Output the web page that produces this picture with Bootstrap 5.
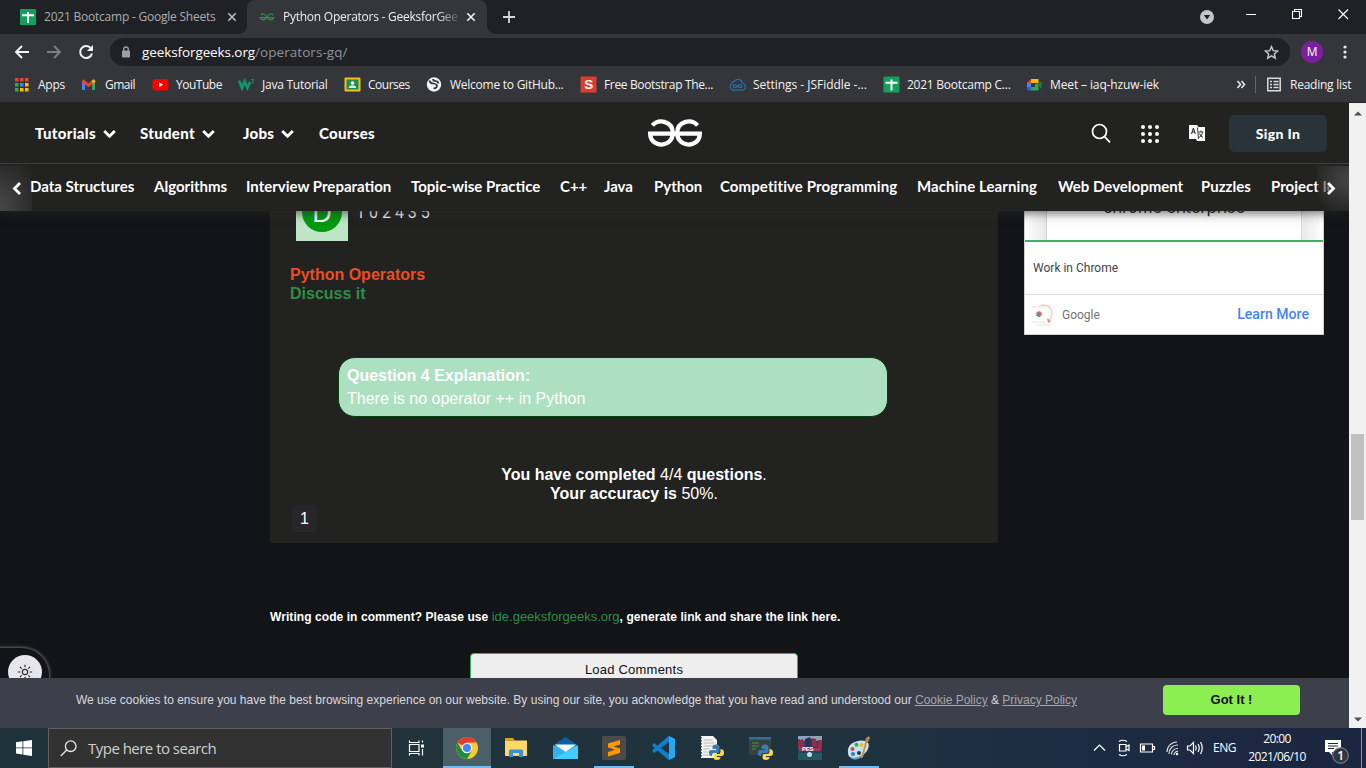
<!DOCTYPE html>
<html lang="en">
<head>
<meta charset="utf-8">
<meta name="viewport" content="width=device-width, initial-scale=1">
<title>Python Operators - GeeksforGeeks</title>
<link href="https://cdn.jsdelivr.net/npm/bootstrap@5.3.0/dist/css/bootstrap.min.css" rel="stylesheet">
<style>
  body { width: 1366px; height: 768px; background: #131417; font-family: "Liberation Sans", Arial, sans-serif; }
  svg { display: block; flex: none; }
  .ui { font-family: "Open Sans", "Noto Sans", sans-serif; font-size: 12px; letter-spacing: -.25px; white-space: nowrap; }

  /* browser chrome */
  .tabstrip { height: 34px; background: #202124; }
  .tab { height: 34px; }
  .tab-1 { width: 247px; padding: 0 10px 0 20px; color: #a9adb2; letter-spacing: -.22px; }
  .tab-2 { width: 240px; padding: 0 11px 0 12px; background: #35363a; border-radius: 8px 8px 0 0; color: #eceef0; }
  .tab-2::before, .tab-2::after { content: ""; position: absolute; bottom: 0; width: 8px; height: 8px; }
  .tab-2::before { left: -8px; background: radial-gradient(circle at 0 0, transparent 7.5px, #35363a 8px); }
  .tab-2::after { right: -8px; background: radial-gradient(circle at 100% 0, transparent 7.5px, #35363a 8px); }
  .tab-title { width: 175px; overflow: hidden; }
  .fade-out { -webkit-mask-image: linear-gradient(90deg, #000 155px, transparent 178px); mask-image: linear-gradient(90deg, #000 155px, transparent 178px); }
  .toolbar { height: 36px; background: #35363a; padding: 0 15px 0 14px; }
  .omnibox { width: 1180px; height: 28px; border-radius: 14px; background: #202124; margin-left: 13px; padding: 0 11px 0 11px; font-size: 13.5px; letter-spacing: -.1px; color: #fff; }
  .omnibox .path { color: #8f9296; letter-spacing: .06px; }
  .avatar { width: 22px; height: 22px; background: #7b1fa2; color: #fff; font-size: 12px; line-height: 21px; margin-left: 11px; }
  .bookmarks { height: 33px; background: #35363a; border-bottom: 1px solid #252529; color: #f2f3f4;
    display: grid; grid-template-columns: 67px 72px 86px 106px 82px 154px 149px 154px 143px 210px 19px 11px 1fr; padding-left: 13px; align-items: center; padding-bottom: 3px; }
  .bookmarks > div { display: flex; align-items: center; gap: 7px; }
  .bookmarks > div:nth-child(-n+2) { gap: 8px; }
  .bookmarks svg { width: 17px; height: 17px; }
  .t4 { letter-spacing: -.48px; } .t0 { letter-spacing: -.03px; } .t1 { letter-spacing: -.12px; } .t3 { letter-spacing: -.35px; }

  /* site */
  .site { width: 1349px; height: 625px; }
  .main-nav { height: 61px; background: #222221; border-bottom: 1px solid #464645; color: #fff; padding-left: 35px; }
  .menu { display: grid; grid-template-columns: 105px 103px 76px 329px; font: 900 15px/60px Lato, sans-serif; letter-spacing: .3px; }
  .menu > div { display: flex; align-items: center; gap: 7px; }
  .menu svg { margin-top: 2px; }
  .signin { width: 98px; height: 37px; border-radius: 5px; background: #293339; font: 900 14px/37px Lato, sans-serif; letter-spacing: .35px; margin: 0 22px 0 24px; }
  .sub-nav { height: 47px; background: #222221; z-index: 2; box-shadow: 0 2px 10px rgba(40,40,40,.7); color: #fff; font: 700 15px/44px Lato, sans-serif; padding-left: 30px;
    display: grid; grid-template-columns: 124px 92px 165px 149px 44px 50px 66px 197px 141px 143px 70px 61px; white-space: nowrap; }
  .wide { letter-spacing: .1px; }
  .edge { position: absolute; top: 2px; height: 45px; width: 32px; display: flex; align-items: center; }
  .edge-l { left: 0; padding-left: 12px; background: radial-gradient(ellipse at 0 90%, #484848, rgba(34,34,33,0) 95%); }
  .edge-r { right: 0; padding-left: 9px; background: radial-gradient(ellipse at 100% 30%, #424242 10%, rgba(34,34,33,.35) 85%, transparent); }
  .content { height: 467px; overflow: hidden; }
  .quiz { width: 728px; height: 332px; background: #222221; margin-left: 270px; padding: 0 20px; color: #fff; font-size: 16px; line-height: 19px; }
  .answer { margin: -22px 0 24px 6px; height: 52px; gap: 8px; font-family: Roboto, sans-serif; }
  .answer > span { padding-bottom: 5px; }
  .letter-box { width: 52px; height: 52px; background: #bfe6c4; padding: 3px 6px; }
  .letter-disc { width: 40px; height: 40px; background: #009a10; font: 27px/42px "Liberation Sans", sans-serif; }
  .topic { color: #ec4e20; }
  .green { color: #2f8d46; }
  .explain { width: 550px; height: 60px; border: 1px solid #053f09; border-radius: 17px; background: #addfc1; margin: 54px 0 48px 48px; padding: 7px 8px; line-height: 22.5px; }
  .page-no { width: 25px; height: 27px; background: #27272a; border-radius: 4px; line-height: 27px; margin: 2px 0 0 2px; }
  .note { margin: 64px 0 0 270px; font-size: 12px; line-height: 20px; letter-spacing: .07px; color: #fff; }
  .note span { font-size: 13px; letter-spacing: 0; }
  .load { width: 328px; height: 40px; margin: 26px 0 0 470px; background: #eee; border: 1px solid #34b35c; border-radius: 4px; color: #111; font-size: 13px; line-height: 31px; letter-spacing: .22px; }
  .promo { width: 300px; height: 124px; background: #fff; margin-left: 26px; border: 1px solid #cfcfcf; border-top: 0; font-family: Roboto, sans-serif; font-size: 12px; color: #444; }
  .promo-art { height: 31px; border-bottom: 2px solid #3fb165; background: linear-gradient(90deg, #fff, #e9e9e9 21px, #fff 22px, #fff 277px, #e9e9e9 278px, #fff); padding: 0 21px; }
  .promo-art div { height: 29px; overflow: hidden; border: solid #d2d2d2; border-width: 0 1px; background: #fff; color: #222; font: 17px/20px Inter, sans-serif; letter-spacing: -.33px; }
  .promo-art span { display: block; margin-top: -14px; }
  .promo-text { height: 53px; border-bottom: 1px solid #ddd; padding: 0 8px; line-height: 53px; }
  .promo-foot { height: 39px; padding: 0 14px 0 7px; color: #757575; }
  .promo-foot b { font-size: 14px; font-weight: 500; color: #4285f4; letter-spacing: .05px; }
  .theme { left: -20px; top: 545px; width: 69px; height: 55px; border-radius: 0 27px 27px 0; background: #131417; box-shadow: 0 0 3px 1px #666; padding: 7px 0 0 28px; }
  .cookies { height: 50px; background: #3d404b; color: #d9d9dc; font-size: 12px; padding: 0 49px 6px 76px; z-index: 3; }
  .cookies u { color: #a5a6aa; }
  .gotit { width: 137px; height: 30px; border-radius: 4px; background: #8bef52; color: #111; font-size: 13px; line-height: 30px; }
  .scroller { width: 17px; background: #f1f1f1; padding: 8px 0 6px; }
  .scroll-thumb { width: 13px; height: 86px; background: #c1c1c1; margin-top: 318px; }

  /* taskbar */
  .taskbar { height: 40px; background: linear-gradient(90deg, #1e323a, #21323a 25%, #1f343e 60%, #1c2b42 80%, #1b2640); color: #fff; }
  .start { width: 48px; }
  .search { width: 344px; height: 40px; border: 1px solid #5f5f5f; background: #323232; color: #d0d0d0; gap: 11px; padding-left: 11px; font-size: 15px; letter-spacing: -.52px; }
  .app { width: 48px; height: 40px; margin-right: 1px; padding-bottom: 1px; }
  .app.active { background: #4b5f68; box-shadow: inset 0 -2px #76b9ed; }
  .app.running { background: linear-gradient(#76b9ed, #76b9ed) center bottom/40px 2px no-repeat; }
  .lang { margin-left: 6px; letter-spacing: -.48px; }
  .clock { line-height: 18px; width: 76px; letter-spacing: -.6px; margin-left: 3px; }
  .notif { margin-left: 8px; }
  .tray-edge { width: 5px; border-left: 1px solid #8690a0; height: 40px; }
</style>
</head>
<body class="d-flex flex-column overflow-hidden">

<!-- tabs -->
<div class="tabstrip ui d-flex justify-content-between">
  <div class="d-flex">
    <div class="tab tab-1 d-flex align-items-center">
      <svg width="16" height="16"><rect width="16" height="16" rx="1" fill="#12a05c"/><path d="M2 6.3H14M8 3V14" stroke="#fff" stroke-width="2"/></svg>
      <span class="ms-2 me-auto">2021 Bootcamp - Google Sheets</span>
      <svg width="10" height="10"><path d="M1.3 1.3 8.7 8.7M8.7 1.3 1.3 8.7" stroke="#bdc1c6" stroke-width="1.6"/></svg>
    </div>
    <div class="tab tab-2 position-relative d-flex align-items-center">
      <svg width="16" height="16" viewBox="0 0 56 56" fill="none" stroke="#2f8d46" stroke-width="4.500"><path d="M7 21A11 11 0 0 1 26 29 11.500 11.500 0 0 1 4 30H52A11.500 11.500 0 0 1 30 29 11 11 0 0 1 49 21"/></svg>
      <span class="tab-title fade-out ms-2 me-auto">Python Operators - GeeksforGeeks</span>
      <svg width="10" height="10"><path d="M1.3 1.3 8.7 8.7M8.7 1.3 1.3 8.7" stroke="#f1f3f4" stroke-width="1.6"/></svg>
    </div>
    <svg class="ms-3 mt-1" width="12" height="26"><path d="M0 13H12M6 7V19" stroke="#d5d7da" stroke-width="1.8"/></svg>
  </div>
  <div class="d-flex">
    <svg width="170" height="34"><circle cx="11" cy="17" r="7" fill="#c4c6c9"/><path d="M7.8 15H14.2L11 19.6Z" fill="#202124"/>
      <g stroke="#fff" fill="none" stroke-width="1.1"><path d="M50 14.5H60M142.500 9.500 152 19M152 9.500 142.500 19"/><path d="M96.500 11.500h7v7h-7zM98.500 11.500v-2h7v7h-2"/></g></svg>
  </div>
</div>

<!-- toolbar -->
<div class="toolbar ui d-flex align-items-center">
  <svg width="64" height="20" fill="none" stroke-width="1.9"><path d="M15 10H2.500M8 4 2 10l6 6" stroke="#f1f3f4"/><path d="M33 10H45.500M40 4l6 6-6 6" stroke="#7d7f83"/></svg>
  <svg width="16" height="16" fill="none"><path d="M13 4.500A6 6 0 1 0 14 9.500" stroke="#f1f3f4" stroke-width="2"/><path d="M15 1V7H9Z" fill="#f1f3f4"/></svg>
  <div class="omnibox d-flex align-items-center ms-3">
    <svg width="10" height="12"><rect x="1" y="4.500" width="8" height="7" rx="1" fill="#9aa0a6"/><path d="M2.700 5V3.300a2.300 2.300 0 0 1 4.600 0V5" stroke="#9aa0a6" fill="none" stroke-width="1.300"/></svg>
    <span style="margin-left:11px">geeksforgeeks.org<span class="path">/operators-gq/</span></span>
    <svg class="ms-auto" width="15" height="15" viewBox="0 0 15 15"><path d="M7.500 1.600 9.200 5.600 13.600 6 10.300 8.900 11.300 13.200 7.500 10.900 3.700 13.200 4.700 8.900 1.400 6 5.800 5.600Z" fill="none" stroke="#c8cacd" stroke-width="1.400"/></svg>
  </div>
  <div class="avatar rounded-circle text-center">M</div>
  <svg class="ms-auto" width="12" height="16" fill="#e8eaed"><circle cx="6" cy="3" r="1.600"/><circle cx="6" cy="8" r="1.600"/><circle cx="6" cy="13" r="1.600"/></svg>
</div>

<!-- bookmarks -->
<div class="bookmarks ui">
  <div><svg viewBox="0 0 17 17"><path d="M2 2h3.500v3.500H2zM7 2h3.500v3.500H7zM12 2h3.500v3.500H12z" fill="#ea4335"/><path d="M2 7h3.500v3.500H2z" fill="#34a853"/><path d="M7 7h3.500v3.500H7z" fill="#4285f4"/><path d="M12 7h3.500v3.500H12zM7 12h3.500v3.500H7zM12 12h3.500v3.500H12z" fill="#fbbc04"/><path d="M2 12h3.500v3.500H2z" fill="#34a853"/></svg>Apps</div>
  <div class="t4"><svg viewBox="0 0 17 17" fill="none" stroke-width="3"><path d="M3.500 14V5" stroke="#4285f4"/><path d="M13.500 14V5" stroke="#34a853"/><path d="M2.500 4.500 8.500 9.300 14.500 4.500" stroke="#ea4335"/><path d="M12.300 6.300 14.700 4.300" stroke="#fbbc04"/></svg>Gmail</div>
  <div class="t4"><svg viewBox="0 0 17 17"><rect x=".5" y="3" width="16" height="11.500" rx="3" fill="#f00"/><path d="M7 6.200v5l4-2.500Z" fill="#fff"/></svg>YouTube</div>
  <div><svg viewBox="0 0 17 17"><path d="M1 4.500 4 12 6.700 5.500l2.700 6.500L12 6" fill="none" stroke="#0c9966" stroke-width="2.600"/><path d="M13 3.500h2.500l-1 1.500q1.400.3.900 1.500-.7.800-2.100.3" fill="none" stroke="#0c9966"/></svg>Java Tutorial</div>
  <div class="t4"><svg viewBox="0 0 17 17"><rect x=".5" y="1.500" width="16" height="14" rx="1" fill="#f6bb20"/><path d="M2.500 3.500h12v10h-12z" fill="#218d4d"/><circle cx="8.500" cy="7" r="1.800" fill="#fff"/><path d="M4.800 12q0-2.800 3.700-2.800t3.700 2.800z" fill="#d7eee0"/></svg>Courses</div>
  <div><svg viewBox="0 0 17 17"><circle cx="8" cy="8.500" r="7.200" fill="#f1f3f4"/><path d="M3.500 4.500q.5 3 4 3 3.500.5 3.500 2.500t-3.500 2.500M7 3q0 2 2.500 2t3 2.500" fill="none" stroke="#35363a" stroke-width="1.700"/></svg>Welcome to GitHub...</div>
  <div class="t3"><svg viewBox="0 0 17 17"><path d="M.5.500h16v16H.5z" fill="#dc3b30"/><text x="8.500" y="13.300" text-anchor="middle" font-family="Liberation Sans" font-weight="700" font-size="13.500" fill="#fff">S</text></svg>Free Bootstrap The...</div>
  <div class="t0"><svg viewBox="0 0 17 17" fill="none" stroke="#2270b8" stroke-width="1.200"><path d="M4.500 14.200a3.600 3.600 0 0 1-1.600-6.600Q3 5 5.500 5.500a4.200 4.200 0 0 1 7.800 2 3.300 3.300 0 0 1-.8 6.700Z"/><path d="M8.500 10.200C7 8.300 4.300 8.300 4.300 10.200s2.700 1.900 4.200 0 4.200-1.900 4.200 0-2.700 1.900-4.200 0"/></svg>Settings - JSFiddle -...</div>
  <div><svg viewBox="0 0 17 17"><rect x=".5" y=".5" width="16" height="16" rx="1" fill="#12a05c"/><path d="M2.500 6.800H14.500M8.500 3.500V14.500" stroke="#fff" stroke-width="2"/></svg>2021 Bootcamp C...</div>
  <div class="t1"><svg viewBox="0 0 17 17"><path d="M1 7 5 3v4z" fill="#ea4335"/><path d="M5 3h7.500v4H5z" fill="#fbbc04"/><path d="M1 7h4v4H1z" fill="#4285f4"/><path d="M1 11h4v3.500H2.500Q1 14.500 1 13z" fill="#1967d2"/><path d="M5 11h4V8.500l3.500-1.500v7.500H5z" fill="#34a853"/><path d="m12 8.500 3.500-3.500v8L12 10z" fill="#188038"/></svg>Meet – iaq-hzuw-iek</div>
  <div><svg viewBox="0 0 17 17"><path d="m1.500 5 3 3.500-3 3.500M5.500 5l3 3.500-3 3.500" fill="none" stroke="#e8eaed" stroke-width="1.600"/></svg></div>
  <div><svg viewBox="0 0 17 17"><path d="M.5 0V17" stroke="#66686c"/></svg></div>
  <div><svg viewBox="0 0 17 17" fill="none" stroke="#dadce0"><path d="M1.800 2.300h12.400v12.400H1.800z" stroke-width="1.500"/><path d="M4 5.500h2M4 8.500h2M4 11.500h2M7.500 5.500h5M7.500 8.500h5M7.500 11.500h5" stroke-width="1.400"/></svg>Reading list</div>
</div>

<!-- page and scrollbar -->
<div class="d-flex">
  <div class="site position-relative overflow-hidden">
    <div class="main-nav d-flex align-items-center">
      <div class="menu">
        <div>Tutorials<svg width="13" height="10"><path d="m1.200 2 5.300 5.300L11.800 2" fill="none" stroke="#fff" stroke-width="2.800"/></svg></div>
        <div>Student<svg width="13" height="10"><path d="m1.200 2 5.300 5.300L11.800 2" fill="none" stroke="#fff" stroke-width="2.800"/></svg></div>
        <div>Jobs<svg width="13" height="10"><path d="m1.200 2 5.300 5.300L11.800 2" fill="none" stroke="#fff" stroke-width="2.800"/></svg></div>
        <div>Courses</div>
      </div>
      <svg width="54" height="28" viewBox="0 0 54 28" fill="none" stroke="#fff" stroke-width="4.300"><path d="M4.400 6.400C11-1 24.800 2.500 24.800 14 24.800 29 2.400 29.500 2.200 14.700H51.800C51.600 29.500 29.200 29 29.200 14 29.200 2.500 43-1 49.600 6.400"/></svg>
      <svg class="ms-auto" width="20" height="20" fill="none" stroke="#fff" stroke-width="1.700"><circle cx="8.500" cy="8.500" r="7"/><path d="m13.500 13.700 5.500 5.600"/></svg>
      <svg style="margin-left:30px" width="18" height="19" fill="#fff"><g id="dots"><circle cx="2" cy="3" r="2"/><circle cx="9" cy="3" r="2"/><circle cx="16" cy="3" r="2"/></g><use href="#dots" y="7"/><use href="#dots" y="14"/></svg>
      <svg style="margin-left:30px" width="16" height="16"><path d="M0 0h8l1.500 2H16v14H8l-1-2H0z" fill="#fff"/><path d="M2.500 9 4.400 3l1.900 6M3.200 7h2.500" stroke="#222" fill="none"/><path d="M9.500 7h5M12 5.500V7M10 12.500Q13 11 13.500 7.500M10.500 8.500q1 3 3.500 4M8.500 2.500 9.500 14" stroke="#222" fill="none" stroke-width=".9"/></svg>
      <div class="signin text-center">Sign In</div>
    </div>
    <div class="sub-nav position-relative">
      <div>Data Structures</div><div>Algorithms</div><div>Interview Preparation</div><div>Topic-wise Practice</div><div>C++</div><div>Java</div><div>Python</div><div class="wide">Competitive Programming</div><div class="wide">Machine Learning</div><div>Web Development</div><div>Puzzles</div><div class="overflow-hidden">Project Ideas</div>
      <div class="edge edge-l"><svg width="10" height="13"><path d="M8 1 2.500 6.500 8 12" fill="none" stroke="#fff" stroke-width="2.800"/></svg></div>
      <div class="edge edge-r"><svg width="10" height="13"><path d="m2 1 5.500 5.500L2 12" fill="none" stroke="#fff" stroke-width="2.800"/></svg></div>
    </div>

    <div class="content">
      <div class="d-flex">
        <div class="quiz">
          <div class="answer d-flex align-items-center">
            <div class="letter-box"><div class="letter-disc rounded-circle text-center">D</div></div>
            <span>1 0 2 4 3 5</span>
          </div>
          <div class="fw-bold topic">Python Operators</div>
          <div class="fw-bold green">Discuss it</div>
          <div class="explain"><b>Question 4 Explanation:</b><br>There is no operator ++ in Python</div>
          <div class="text-center"><b>You have completed</b> 4/4 <b>questions</b>.<br><b>Your accuracy is</b> 50%.</div>
          <div class="page-no text-center">1</div>
        </div>
        <div class="promo">
          <div class="promo-art"><div class="text-center"><span>chrome enterprise</span></div></div>
          <div class="promo-text">Work in Chrome</div>
          <div class="promo-foot d-flex align-items-center">
            <svg class="me-2" width="22" height="22"><path d="M6 3a8 8 0 1 1 11 13" fill="none" stroke="#fbc9c6" stroke-width="1.300"/><path d="M0 3h14M0 18h14M4 21h14" stroke="#f0f0f0" stroke-width="2"/><circle cx="7" cy="10" r="2.700" fill="#dc6a58"/><circle cx="7" cy="10.300" r="1.100" fill="#4285f4"/><path d="M4.800 10.500a2.300 2.300 0 0 0 3 2" stroke="#34a853" fill="none"/><path d="M15 14l4 3-3 2.500z" fill="#f28b82"/></svg>
            <span>Google</span><b class="ms-auto">Learn More</b>
          </div>
        </div>
      </div>
      <div class="note fw-bold">Writing code in comment? Please use <span class="green fw-normal">ide.geeksforgeeks.org</span>, generate link and share the link here.</div>
      <div class="load text-center">Load Comments</div>
    </div>

    <div class="theme position-absolute">
      <svg width="34" height="34"><circle cx="17" cy="17" r="17" fill="#e6e6ec"/><g fill="none" stroke="#333" stroke-width="1.200"><circle cx="17" cy="17" r="2.700"/><path d="M17 9.800v2.500M17 21.700v2.500M9.800 17h2.500M21.700 17h2.500M11.900 11.900l1.800 1.800M20.300 20.300l1.800 1.800M11.900 22.100l1.800-1.800M20.300 13.700l1.800-1.800"/></g></svg>
    </div>
    <div class="cookies position-relative d-flex align-items-center justify-content-between">
      <span>We use cookies to ensure you have the best browsing experience on our website. By using our site, you acknowledge that you have read and understood our <u>Cookie Policy</u> &amp; <u>Privacy Policy</u></span>
      <div class="gotit text-center fw-bold">Got It !</div>
    </div>
  </div>
  <div class="scroller d-flex flex-column align-items-center">
    <svg width="8" height="5"><path d="M0 4.500 4 .5 8 4.500z" fill="#505050"/></svg>
    <div class="scroll-thumb"></div>
    <svg class="mt-auto" width="8" height="5"><path d="M0 .5 4 4.500 8 .5z" fill="#505050"/></svg>
  </div>
</div>

<!-- taskbar -->
<div class="taskbar ui d-flex align-items-center">
  <div class="start d-flex justify-content-center"><svg width="16" height="16" fill="#fff"><path d="M0 2.300 6.500 1.300v6.200H0zM7.300 1.200 16 0v7.500H7.300zM0 8.300h6.500v6.200L0 13.600zM7.300 8.300H16V16l-8.700-1.300z"/></svg></div>
  <div class="search d-flex align-items-center">
    <svg width="17" height="17" fill="none" stroke="#e8e8e8" stroke-width="1.300"><circle cx="10.700" cy="6.200" r="5.300"/><path d="M6.800 10 .8 16"/></svg>Type here to search
  </div>
  <div class="app d-flex align-items-center justify-content-center"><svg width="17" height="16" fill="none" stroke="#fff" stroke-width="1.200"><path d="M1.500 4.500h9.500v7H1.500zM1.500.500V2.500H11V.500M1.500 15.500V13.500H11V15.500M14.500.500v2M14.500 9v6.500"/><path d="M13 4.500h3v3h-3z" fill="#fff" stroke="none"/></svg></div>
  <div class="d-flex" style="margin-left:2px">
    <div class="app active d-flex align-items-center justify-content-center"><svg width="22" height="22" viewBox="0 0 22 22"><circle cx="11" cy="11" r="11" fill="#fcc934"/><path d="M11 11 1.500 5.500A11 11 0 0 1 20.500 5.500H11z" fill="#e33b2e"/><path d="M1.500 5.500A11 11 0 0 0 11 22l4.800-8.300L11 11 6.200 13.700z" fill="#1e8e3e"/><circle cx="11" cy="11" r="5.300" fill="#fff"/><circle cx="11" cy="11" r="4.100" fill="#4285f4"/></svg></div>
    <div class="app d-flex align-items-center justify-content-center"><svg width="22" height="19"><path d="M0 0h8l2 2.500H0z" fill="#e2a100"/><path d="M0 2.500h22V18H0z" fill="#ffd766"/><path d="M4 19v-6q0-1.500 1.500-1.500h11Q18 11.500 18 13v6h-4v-4H8v4z" fill="#3a8fd6"/></svg></div>
    <div class="app d-flex align-items-center justify-content-center"><svg width="25" height="22"><path d="M0 8.500 12.500 0 25 8.500z" fill="#0f5fa8"/><path d="M0 8.500h25V22H0z" fill="#2fb1f0"/><path d="M0 22 25 8.500V22z" fill="#44cdfc"/><path d="M2 7.500h21L12.500 15z" fill="#f5f8fb"/></svg></div>
    <div class="app running d-flex align-items-center justify-content-center"><svg width="24" height="24"><rect width="24" height="24" rx="2" fill="#4b4b4b"/><path d="M18 4v4.500l-6.500 2 6.500 2v4.500L6 20.500V16l7-2.200-7-2.300V7.500z" fill="#ff9800"/></svg></div>
    <div class="app d-flex align-items-center justify-content-center"><svg width="24" height="24"><path d="M17.500 0 24 3v18l-6.500 3L1 9.500 3 7l15 11V6L3 17 1 14.500z" fill="#0e7fcb"/><path d="M18 0l6 3v18l-6 3z" fill="#2ba7ef"/></svg></div>
    <div class="app d-flex align-items-center justify-content-center"><svg width="24" height="24"><path d="M1 0h12l4 4v18H1z" fill="#f3f3f3"/><path d="M3.500 4h9M3.500 7h11M3.500 10h11M3.500 13h6M3.500 16h5M3.500 19h5" stroke="#b5b5b5"/><path d="M1.500 1v21" stroke="#555" stroke-dasharray="1.500"/><g id="py"><path d="M9 18v-2q0-2 2-2h5v-1h-3.500v-2Q12.500 8.500 16 8.500t3.500 2.500v4q0 2-2 2H14q-2 0-2 3h-1q-2 0-2-2z" fill="#3d7ab0"/><path d="M20.500 13q3.500 0 3.500 3.500T21.500 20H17v1h3.500q0 3-3.500 3t-3.500-2.500V20q0-2 2-2H18q2.500 0 2.500-2.500z" fill="#ffd845"/></g></svg></div>
    <div class="app d-flex align-items-center justify-content-center"><svg width="24" height="24"><path d="M0 1h22v18H0z" fill="#3c3f41"/><path d="M0 1h22v2.500H0z" fill="#356f9f"/><path d="M3 7h7M3 10h7M3 13h4" stroke="#35833a" stroke-width="1.300"/><use href="#py"/></svg></div>
    <div class="app d-flex align-items-center justify-content-center"><svg width="24" height="24"><path d="M0 0h24v24H0z" fill="#24406d"/><path d="M0 0h24v4L18 5 12 2 6 5 0 3z" fill="#8fa3b8"/><path d="M0 5l5-2 2 6-5 4-2-1zM14 2l4 1 1 8-5-1zM20 4h4v8h-4z" fill="#8f3048"/><path d="M7 3l5-2 1 9-5 1z" fill="#263257"/><path d="M1 12h22v3H1z" fill="#a33650"/><path d="M0 17h24v7H0z" fill="#23585f"/><text x="4" y="14.500" font-family="Liberation Sans" font-weight="700" font-size="6" fill="#fff">PES</text><circle cx="11.500" cy="18.500" r="2.500" fill="#cfdbe6"/></svg></div>
    <div class="app running d-flex align-items-center justify-content-center"><svg width="24" height="24"><path d="M1 17Q0 8 9 5.500t12.500 2Q23 14 15 20T3 21q-2-1-2-4z" fill="#c5e3f2"/><path d="M2 20q5 4 13-1l3-3q-1 5-7 7t-9-3z" fill="#6f9db8"/><circle cx="5.500" cy="13" r="2" fill="#d3482f"/><circle cx="9.500" cy="8.800" r="2" fill="#38a853"/><circle cx="14.500" cy="9" r="1.800" fill="#f4b400"/><circle cx="6" cy="18" r="2" fill="#3579d6"/><circle cx="12" cy="17" r="2" fill="#22394a"/><path d="M20.500 5 16 21l-2 2 .5-3L18.500 5z" fill="#d98a36"/><path d="M18 5.500 19 2l3-2 1 2-2 4z" fill="#b98553"/></svg></div>
  </div>
  <svg class="ms-auto" width="114" height="24" viewBox="0 0 114 24" fill="none" stroke="#fff" stroke-width="1.200">
    <path d="m1 14.500 5.500-5.500L12 14.500"/>
    <path d="M26.500 8.500h6.500v6.500h-6.500zM33.500 10.500l2.500-1.500v5.500l-2.500-1.500M26 5.500q3.500-2.500 8 0M26 18.500q3.500 2.500 8 0"/>
    <path d="M47.500 8h12v8h-12zM60 10.500h1.500v3H60"/><path d="M49 9.500h3v5h-3z" fill="#fff" stroke="none"/>
    <path d="M74 16a10 10 0 0 1 10-10M76 18a8.500 8.500 0 0 1 9-9M78.500 18.500A6 6 0 0 1 85 12.500M81 19a3.500 3.500 0 0 1 4-3.500" stroke="#d5dae0"/><circle cx="84" cy="18" r="1.300" fill="#fff" stroke="none"/>
    <path d="M94.500 10h2.500l3.500-3.500v11L97 14h-2.500zM102.500 9.500q1.500 2.500 0 5M105 8q2.500 4 0 8M107.500 6q3.500 6 0 12"/>
  </svg>
  <span class="lang">ENG</span>
  <div class="clock text-center">20:00<br>2021/06/10</div>
  <svg class="notif" width="38" height="40"><path d="M2 12h16v12H9v3l-3-3H2z" fill="#fff"/><path d="M5 15.500h10M5 18h10M5 20.500h6" stroke="#1b2640"/><circle cx="17.500" cy="27.500" r="7.800" fill="#35363b" stroke="#8d8f94"/><text x="17.500" y="32" text-anchor="middle" font-family="Open Sans" font-size="12" font-weight="600" fill="#fff">1</text></svg>
  <div class="tray-edge"></div>
</div>

<script src="https://cdn.jsdelivr.net/npm/bootstrap@5.3.0/dist/js/bootstrap.bundle.min.js"></script>
</body>
</html>
